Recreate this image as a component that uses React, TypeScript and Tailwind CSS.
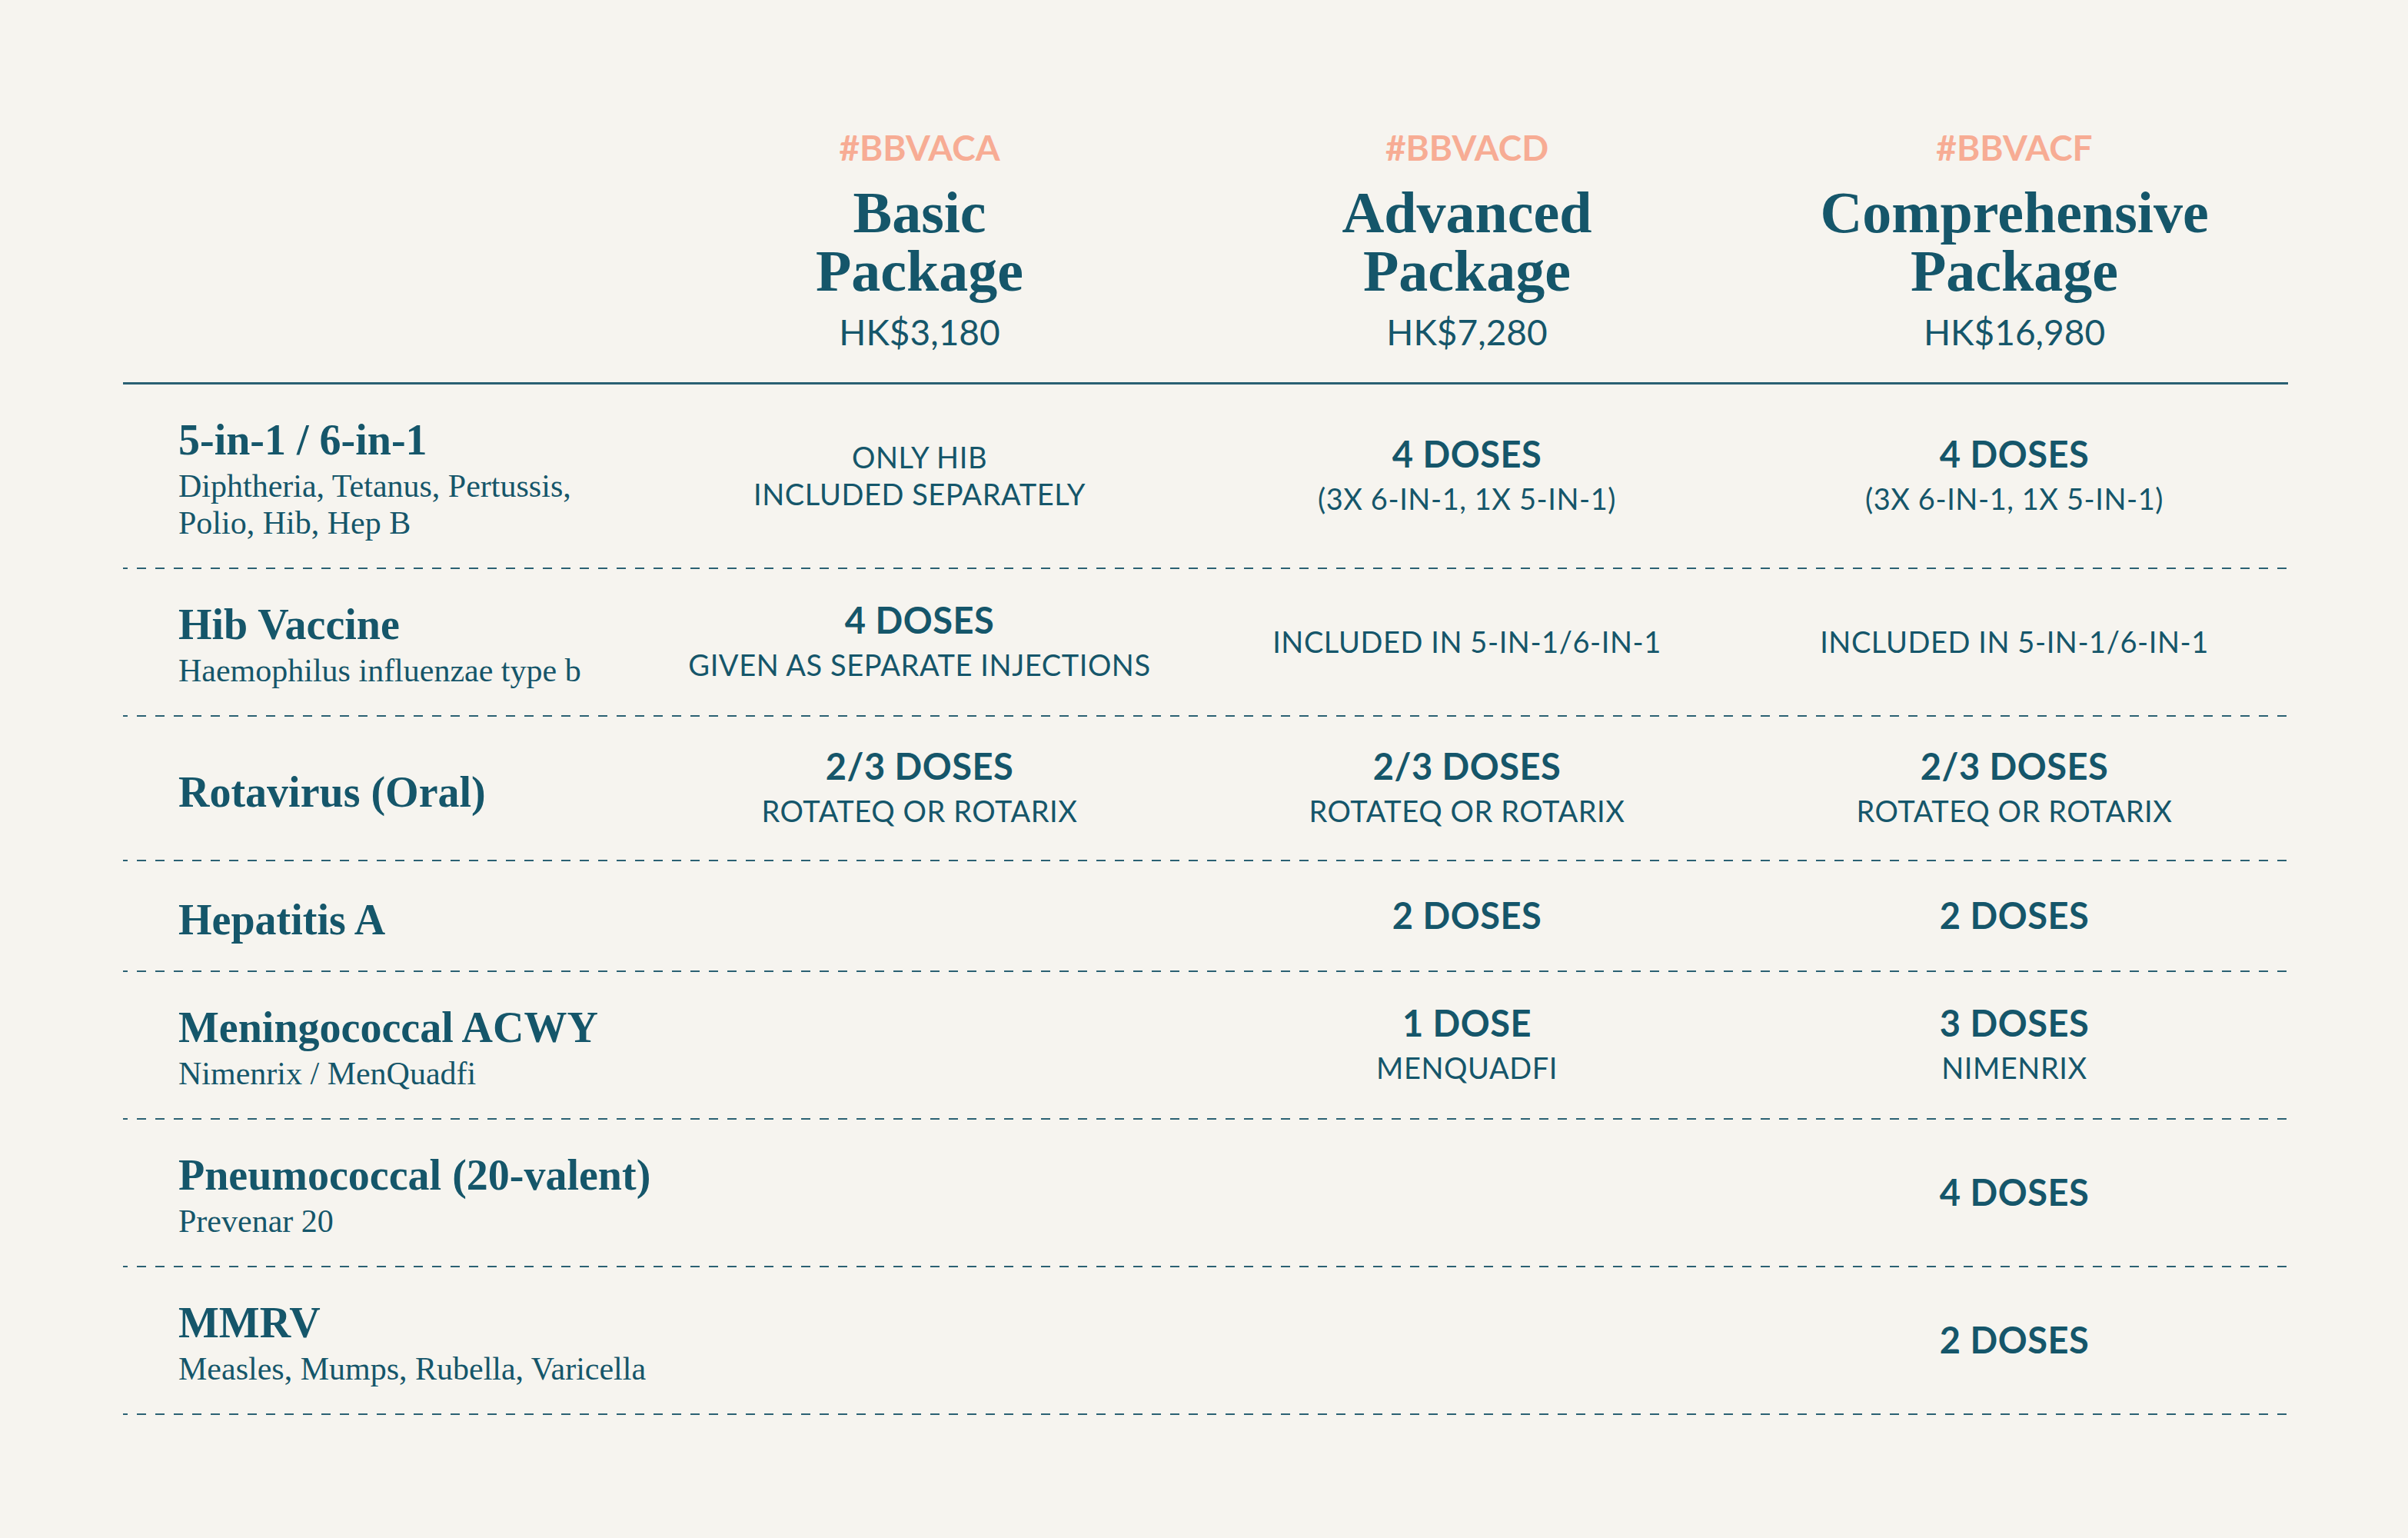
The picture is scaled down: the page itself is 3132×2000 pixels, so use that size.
const sans = "font-['Lato',sans-serif]";
const serif = "font-['Liberation_Serif','Times_New_Roman',serif]";

type Cell = { bold?: string; lines?: string[] } | null;

type Row = {
  title: string;
  sub?: string[];
  height: string;
  cells: Cell[];
};

const packages = [
  { tag: "#BBVACA", name: ["Basic", "Package"], price: "HK$3,180" },
  { tag: "#BBVACD", name: ["Advanced", "Package"], price: "HK$7,280" },
  { tag: "#BBVACF", name: ["Comprehensive", "Package"], price: "HK$16,980" },
];

const rows: Row[] = [
  {
    title: "5-in-1 / 6-in-1",
    sub: ["Diphtheria, Tetanus, Pertussis,", "Polio, Hib, Hep B"],
    height: "h-[238px]",
    cells: [
      { lines: ["ONLY HIB", "INCLUDED SEPARATELY"] },
      { bold: "4 DOSES", lines: ["(3X 6-IN-1, 1X 5-IN-1)"] },
      { bold: "4 DOSES", lines: ["(3X 6-IN-1, 1X 5-IN-1)"] },
    ],
  },
  {
    title: "Hib Vaccine",
    sub: ["Haemophilus influenzae type b"],
    height: "h-[190px]",
    cells: [
      { bold: "4 DOSES", lines: ["GIVEN AS SEPARATE INJECTIONS"] },
      { lines: ["INCLUDED IN 5-IN-1/6-IN-1"] },
      { lines: ["INCLUDED IN 5-IN-1/6-IN-1"] },
    ],
  },
  {
    title: "Rotavirus (Oral)",
    height: "h-[186px]",
    cells: [
      { bold: "2/3 DOSES", lines: ["ROTATEQ OR ROTARIX"] },
      { bold: "2/3 DOSES", lines: ["ROTATEQ OR ROTARIX"] },
      { bold: "2/3 DOSES", lines: ["ROTATEQ OR ROTARIX"] },
    ],
  },
  {
    title: "Hepatitis A",
    height: "h-[142px]",
    cells: [null, { bold: "2 DOSES" }, { bold: "2 DOSES" }],
  },
  {
    title: "Meningococcal ACWY",
    sub: ["Nimenrix / MenQuadfi"],
    height: "h-[190px]",
    cells: [
      null,
      { bold: "1 DOSE", lines: ["MENQUADFI"] },
      { bold: "3 DOSES", lines: ["NIMENRIX"] },
    ],
  },
  {
    title: "Pneumococcal (20-valent)",
    sub: ["Prevenar 20"],
    height: "h-[190px]",
    cells: [null, null, { bold: "4 DOSES" }],
  },
  {
    title: "MMRV",
    sub: ["Measles, Mumps, Rubella, Varicella"],
    height: "h-[190px]",
    cells: [null, null, { bold: "2 DOSES" }],
  },
];

function Dashed() {
  return (
    <div className="h-[2px] w-full bg-[repeating-linear-gradient(to_right,#2b6173_0_6px,transparent_6px_18px,#2b6173_18px_24px)]" />
  );
}

function DataCell({ cell }: { cell: Cell }) {
  if (!cell) return <div />;
  return (
    <div className={`flex flex-col items-center justify-center pb-[2px] text-center ${sans}`}>
      {cell.bold && (
        <div className="text-[47px] font-bold leading-[48px] tracking-[0.01em]">{cell.bold}</div>
      )}
      {cell.lines && (
        <div className={cell.bold ? "mt-[12px] text-[38px] leading-[44px]" : "text-[38px] leading-[48px]"}>
          {cell.lines.map((l) => (
            <div key={l} className="tracking-[0.015em]">
              {l}
            </div>
          ))}
        </div>
      )}
    </div>
  );
}

export default function App() {
  return (
    <div className="min-h-screen w-full bg-[#f6f4ef] text-[#15566a]">
      <div className="ml-[160px] w-[2816px] pt-[168px] pb-[160px]">
        {/* package headers */}
        <div className="grid grid-cols-[680px_712px_712px_712px] border-b-[3px] border-[#2a6073] pb-[39px]">
          <div />
          {packages.map((p) => (
            <div key={p.tag} className="flex flex-col items-center text-center">
              <div className={`${sans} text-[46px] font-bold leading-[48px] text-[#f7ac94]`}>{p.tag}</div>
              <div className={`${serif} mt-[22px] text-[76px] font-bold leading-[76px]`}>
                {p.name[0]}
                <br />
                {p.name[1]}
              </div>
              <div className={`${sans} mt-[16px] text-[46px] leading-[52px]`}>{p.price}</div>
            </div>
          ))}
        </div>

        {rows.map((r) => (
          <div key={r.title}>
            <div className={`grid grid-cols-[680px_712px_712px_712px] ${r.height}`}>
              <div className={`flex flex-col justify-center whitespace-nowrap pl-[72px] pt-[10px] ${serif}`}>
                <div className="text-[56px] font-bold leading-[56px]">{r.title}</div>
                {r.sub && (
                  <div className="mt-[8px] text-[42px] leading-[48px]">
                    {r.sub.map((s) => (
                      <div key={s}>{s}</div>
                    ))}
                  </div>
                )}
              </div>
              {r.cells.map((c, i) => (
                <DataCell key={i} cell={c} />
              ))}
            </div>
            <Dashed />
          </div>
        ))}
      </div>
    </div>
  );
}
